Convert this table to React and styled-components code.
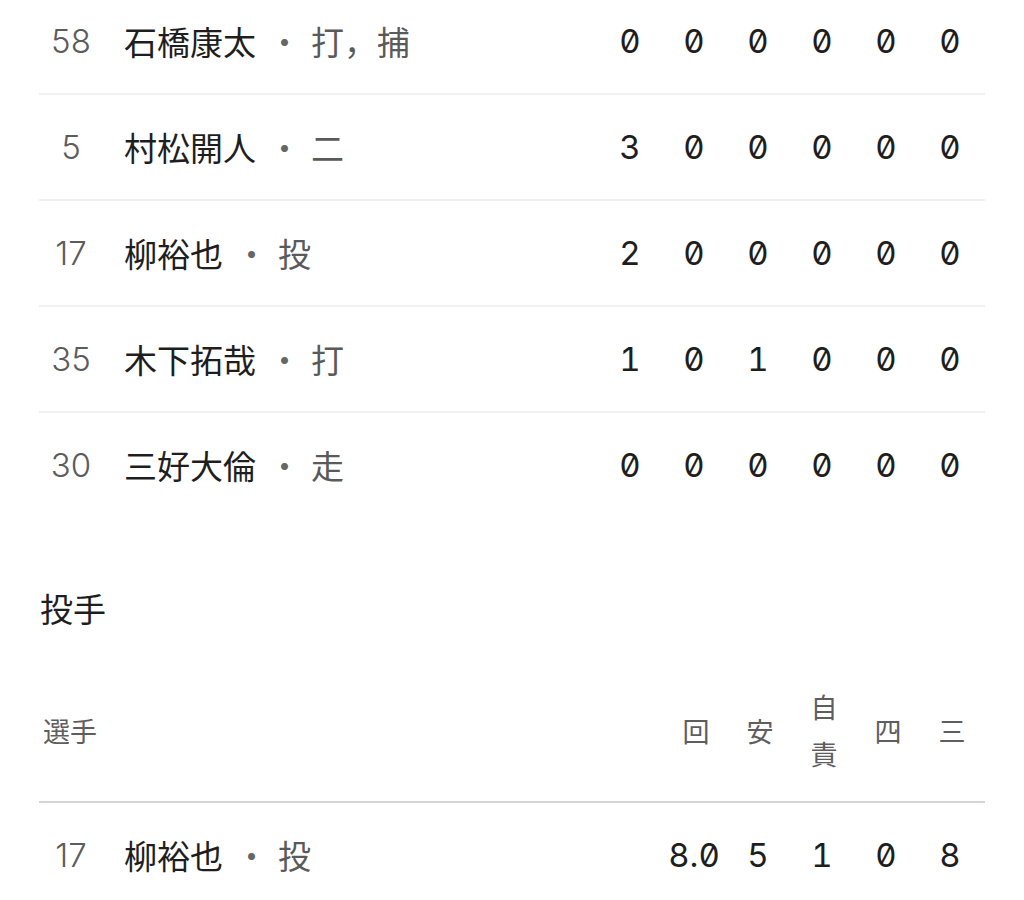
import React from "react";
import styled, { createGlobalStyle } from "styled-components";

const GlobalStyle = createGlobalStyle`
  html, body {
    margin: 0;
    padding: 0;
    background: #ffffff;
  }
  body {
    font-family: Inter, "Noto Sans CJK JP", sans-serif;
    color: #1e1e1e;
    overflow: hidden;
  }
`;

const Page = styled.div`
  width: 1024px;
  padding: 0 39px;
  box-sizing: border-box;
  margin-top: -11px;
`;

const Table = styled.div`
  display: flex;
  flex-direction: column;
`;

const Row = styled.div`
  display: grid;
  grid-template-columns: 64px 1fr repeat(${(p) => p.$cols}, 64px);
  align-items: center;
  height: ${(p) => (p.$last ? "104px" : "106px")};
  box-sizing: border-box;
  padding-right: 3px;
  border-bottom: ${(p) => (p.$last ? "none" : "2px solid #f1f1f1")};
`;

const HeadRow = styled.div`
  display: grid;
  grid-template-columns: 1fr repeat(${(p) => p.$cols}, 64px);
  align-items: center;
  padding: 22px 1px 22px 4px;
  border-bottom: 2px solid #d4d4da;
`;

const Jersey = styled.div`
  text-align: center;
  font-size: 33px;
  color: #5c5c5c;
  font-weight: 300;
`;

const Player = styled.div`
  padding-left: 21px;
  font-size: 33px;
  color: #1e1e1e;
  white-space: nowrap;
  display: flex;
  align-items: center;
`;

const Dot = styled.span`
  color: #666;
  margin: 0 10px 0 12px;
`;

const Pos = styled.span`
  color: #5a5a5a;
`;

const Stat = styled.div`
  text-align: center;
  font-size: 33px;
  color: #1e1e1e;
  font-feature-settings: "zero" 1, "tnum" 1;
`;

const Heading = styled.h2`
  margin: 69px 0 29px 1px;
  font-size: 33px;
  font-weight: 400;
  line-height: 48px;
  color: #1e1e1e;
`;

const HeadLabel = styled.div`
  font-size: 27px;
  line-height: 47px;
  color: #5e5e5e;
  text-align: center;
  white-space: pre-line;
`;

const HeadPlayer = styled(HeadLabel)`
  text-align: left;
`;

const batters = [
  { no: "58", name: "石橋康太", pos: "打，捕", stats: [0, 0, 0, 0, 0, 0] },
  { no: "5", name: "村松開人", pos: "二", stats: [3, 0, 0, 0, 0, 0] },
  { no: "17", name: "柳裕也", pos: "投", stats: [2, 0, 0, 0, 0, 0] },
  { no: "35", name: "木下拓哉", pos: "打", stats: [1, 0, 1, 0, 0, 0] },
  { no: "30", name: "三好大倫", pos: "走", stats: [0, 0, 0, 0, 0, 0] },
];

const pitchHeads = ["回", "安", "自\n責", "四", "三"];

const pitchers = [
  { no: "17", name: "柳裕也", pos: "投", stats: ["8.0", 5, 1, 0, 8] },
];

function PlayerRow({ p, last }) {
  return (
    <Row $cols={p.stats.length} $last={last}>
      <Jersey>{p.no}</Jersey>
      <Player>
        {p.name}
        <Dot>・</Dot>
        <Pos>{p.pos}</Pos>
      </Player>
      {p.stats.map((s, i) => (
        <Stat key={i}>{s}</Stat>
      ))}
    </Row>
  );
}

export default function App() {
  return (
    <>
      <GlobalStyle />
      <Page>
        <Table>
          {batters.map((b, i) => (
            <PlayerRow key={b.no + b.name} p={b} last={i === batters.length - 1} />
          ))}
        </Table>

        <Heading>投手</Heading>
        <Table>
          <HeadRow $cols={pitchHeads.length}>
            <HeadPlayer>選手</HeadPlayer>
            {pitchHeads.map((h) => (
              <HeadLabel key={h}>{h}</HeadLabel>
            ))}
          </HeadRow>
          {pitchers.map((p) => (
            <PlayerRow key={p.no} p={p} last />
          ))}
        </Table>
      </Page>
    </>
  );
}
